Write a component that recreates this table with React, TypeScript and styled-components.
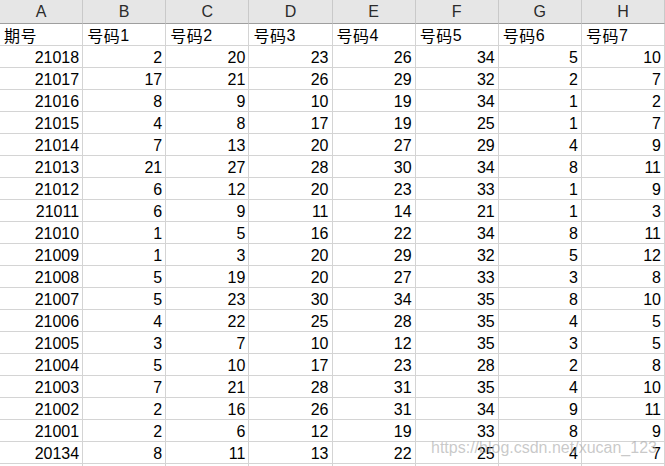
import React from "react";
import styled, { createGlobalStyle } from "styled-components";

const Global = createGlobalStyle`
  html, body { margin: 0; padding: 0; background: #ffffff; overflow: hidden; }
  body { font-family: "Liberation Sans", "Noto Sans CJK SC", Arial, sans-serif; }
`;

const Sheet = styled.div`
  position: relative;
  width: 665px;
  height: 466px;
  overflow: hidden;
  background: #ffffff;
`;

const Grid = styled.div`
  display: grid;
  grid-template-columns: repeat(8, 1fr);
  grid-auto-rows: 22px;
  grid-template-rows: 24px;
`;

const ColHead = styled.div`
  display: flex;
  align-items: flex-end;
  justify-content: center;
  box-sizing: border-box;
  background: #e6e6e6;
  border-right: 1px solid #c9c9c9;
  border-bottom: 1px solid #9e9e9e;
  padding-bottom: 2px;
  font-size: 16px;
  line-height: 18px;
  color: #2b2b2b;
`;

const Cell = styled.div<{ $num?: boolean }>`
  display: flex;
  align-items: flex-end;
  justify-content: ${(p) => (p.$num ? "flex-end" : "flex-start")};
  box-sizing: border-box;
  border-right: 1px solid #d4d4d4;
  border-bottom: 1px solid #d4d4d4;
  padding: 0 3px 0 4px;
  font-size: 16px;
  line-height: 18px;
  color: #000000;
  white-space: nowrap;
`;

const Label = styled.span`
  font-family: "Noto Sans CJK SC", "Liberation Sans", sans-serif;
  font-size: 16px;
  line-height: 20px;
  letter-spacing: 0.5px;
`;

const Digit = styled.span`
  font-family: "Liberation Sans", sans-serif;
  font-size: 16px;
  line-height: 18px;
  letter-spacing: 0;
`;

const Watermark = styled.div`
  position: absolute;
  left: 431px;
  top: 438px;
  font-size: 16px;
  line-height: 20px;
  color: rgba(165, 165, 165, 0.6);
  white-space: nowrap;
  pointer-events: none;
`;

const cols = ["A", "B", "C", "D", "E", "F", "G", "H"];
const heads: [string, string][] = [
  ["期号", ""],
  ["号码", "1"],
  ["号码", "2"],
  ["号码", "3"],
  ["号码", "4"],
  ["号码", "5"],
  ["号码", "6"],
  ["号码", "7"],
];
const rows: number[][] = [
  [21018, 2, 20, 23, 26, 34, 5, 10],
  [21017, 17, 21, 26, 29, 32, 2, 7],
  [21016, 8, 9, 10, 19, 34, 1, 2],
  [21015, 4, 8, 17, 19, 25, 1, 7],
  [21014, 7, 13, 20, 27, 29, 4, 9],
  [21013, 21, 27, 28, 30, 34, 8, 11],
  [21012, 6, 12, 20, 23, 33, 1, 9],
  [21011, 6, 9, 11, 14, 21, 1, 3],
  [21010, 1, 5, 16, 22, 34, 8, 11],
  [21009, 1, 3, 20, 29, 32, 5, 12],
  [21008, 5, 19, 20, 27, 33, 3, 8],
  [21007, 5, 23, 30, 34, 35, 8, 10],
  [21006, 4, 22, 25, 28, 35, 4, 5],
  [21005, 3, 7, 10, 12, 35, 3, 5],
  [21004, 5, 10, 17, 23, 28, 2, 8],
  [21003, 7, 21, 28, 31, 35, 4, 10],
  [21002, 2, 16, 26, 31, 34, 9, 11],
  [21001, 2, 6, 12, 19, 33, 8, 9],
  [20134, 8, 11, 13, 22, 25, 4, 7],
];

export default function App() {
  return (
    <Sheet>
      <Global />
      <Grid>
        {cols.map((c) => (
          <ColHead key={c}>{c}</ColHead>
        ))}
        {heads.map(([h, d], k) => (
          <Cell key={`h-${k}`}>
            <Label>{h}</Label>
            {d && <Digit>{d}</Digit>}
          </Cell>
        ))}
        {rows.map((r, i) =>
          r.map((v, j) => (
            <Cell key={`${i}-${j}`} $num>
              {v}
            </Cell>
          ))
        )}
        {cols.map((c) => (
          <Cell key={`empty-${c}`} />
        ))}
      </Grid>
      <Watermark>https://blog.csdn.net/xucan_123</Watermark>
    </Sheet>
  );
}
